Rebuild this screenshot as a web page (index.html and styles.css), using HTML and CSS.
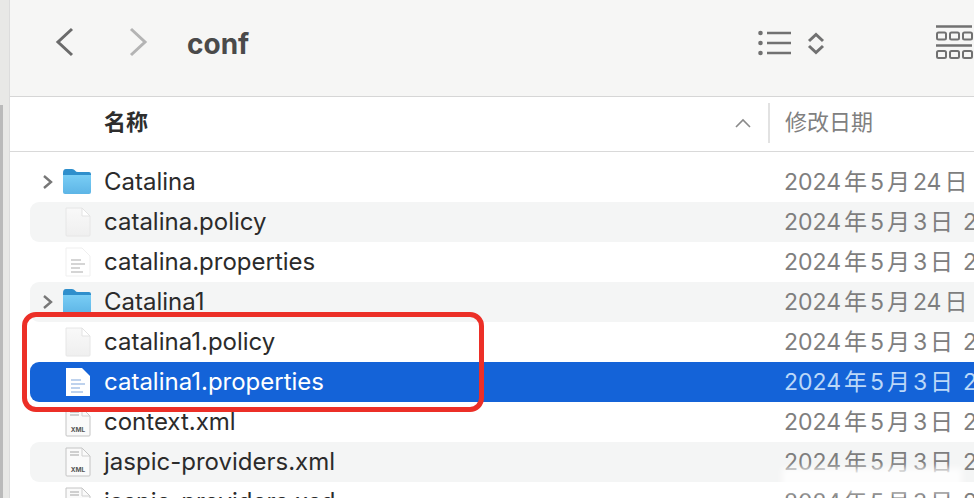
FILE: index.html
```html
<!DOCTYPE html>
<html lang="zh-CN">
<head>
    <meta charset="UTF-8">
    <title>conf</title>
    <link rel="stylesheet" href="styles.css">
</head>
<body>
    <div class="sidebar"></div>
    <div class="window">
        <!-- 工具栏 -->
        <div class="toolbar">
            <svg class="nav-icon" width="22" height="32" viewBox="0 0 22 32"><path d="M17 3 L3 16 L17 29" stroke="#6b6b6b"/></svg>
            <svg class="nav-icon nav-next" width="22" height="32" viewBox="0 0 22 32"><path d="M3 3 L17 16 L3 29" stroke="#b4b4b4"/></svg>
            <div class="title">conf</div>
            <svg class="list-icon" width="70" height="32" viewBox="0 0 70 32">
                <g stroke="#717171" stroke-width="2.4" fill="none">
                    <path d="M10 6 H34 M10 16 H34 M10 26 H34"/>
                    <path d="M52 14 L59 7.500 L66 14 M52 19 L59 25.500 L66 19" stroke-width="3"/>
                </g>
                <g fill="#717171"><circle cx="3.500" cy="6" r="2.300"/><circle cx="3.500" cy="16" r="2.300"/><circle cx="3.500" cy="26" r="2.300"/></g>
            </svg>
            <svg class="grid-icon" width="38" height="36" viewBox="0 0 38 36">
                <g fill="none" stroke="#717171">
                    <path d="M0 2.500 H36 M0 21.500 H36" stroke-width="2.400"/>
                    <rect x="1" y="8.500" width="9" height="7" rx="1.500" stroke-width="2"/><rect x="14" y="8.500" width="9" height="7" rx="1.500" stroke-width="2"/><rect x="27" y="8.500" width="9" height="7" rx="1.500" stroke-width="2"/>
                    <rect x="1" y="27" width="9" height="7" rx="1.500" stroke-width="2"/><rect x="14" y="27" width="9" height="7" rx="1.500" stroke-width="2"/><rect x="27" y="27" width="9" height="7" rx="1.500" stroke-width="2"/>
                </g>
            </svg>
        </div>

        <!-- 列标题 -->
        <div class="columns">
            <div class="col-name">名称</div>
            <svg class="sort-icon" width="16" height="10" viewBox="0 0 16 10"><path d="M1 9 L8 2 L15 9" fill="none" stroke="#8a8a8a" stroke-width="1.600"/></svg>
            <div class="col-sep"></div>
            <div class="col-date">修改日期</div>
        </div>

        <!-- 文件列表 -->
        <div class="rows">
            <div class="row">
                <svg class="arrow" width="12" height="16" viewBox="0 0 12 16"><path d="M2 2 L9 8 L2 14" fill="none" stroke="#777" stroke-width="2.400"/></svg>
                <svg class="icon" width="30" height="28" viewBox="0 0 30 28"><use href="#folder"/></svg>
                <span class="name">Catalina</span><span class="date">2024 年 5 月 24 日</span>
            </div>
            <div class="row odd">
                <svg class="icon" width="30" height="30" viewBox="0 0 30 30"><use href="#doc"/></svg>
                <span class="name">catalina.policy</span><span class="date">2024 年 5 月 3 日<span class="time">2</span></span>
            </div>
            <div class="row">
                <svg class="icon" width="30" height="30" viewBox="0 0 30 30"><use href="#doc-lines"/></svg>
                <span class="name">catalina.properties</span><span class="date">2024 年 5 月 3 日<span class="time">2</span></span>
            </div>
            <div class="row odd">
                <svg class="arrow" width="12" height="16" viewBox="0 0 12 16"><path d="M2 2 L9 8 L2 14" fill="none" stroke="#777" stroke-width="2.400"/></svg>
                <svg class="icon" width="30" height="28" viewBox="0 0 30 28"><use href="#folder"/></svg>
                <span class="name">Catalina1</span><span class="date">2024 年 5 月 24 日</span>
            </div>
            <div class="row">
                <svg class="icon" width="30" height="30" viewBox="0 0 30 30"><use href="#doc"/></svg>
                <span class="name">catalina1.policy</span><span class="date">2024 年 5 月 3 日<span class="time">2</span></span>
            </div>
            <div class="row selected">
                <svg class="icon" width="30" height="30" viewBox="0 0 30 30"><use href="#doc-white"/></svg>
                <span class="name">catalina1.properties</span><span class="date">2024 年 5 月 3 日<span class="time">2</span></span>
            </div>
            <div class="row">
                <svg class="icon" width="30" height="30" viewBox="0 0 30 30"><use href="#doc-xml"/></svg>
                <span class="name">context.xml</span><span class="date">2024 年 5 月 3 日<span class="time">2</span></span>
            </div>
            <div class="row odd">
                <svg class="icon" width="30" height="30" viewBox="0 0 30 30"><use href="#doc-xml"/></svg>
                <span class="name">jaspic-providers.xml</span><span class="date">2024 年 5 月 3 日<span class="time">2</span></span>
            </div>
            <div class="row">
                <svg class="icon" width="30" height="30" viewBox="0 0 30 30"><use href="#doc-xml"/></svg>
                <span class="name">jaspic-providers.xsd</span><span class="date">2024 年 5 月 3 日<span class="time">2</span></span>
            </div>
        </div>

        <!-- 红框标注 -->
        <div class="callout"></div>
        <div class="watermark"></div>
    </div>

    <svg class="defs" width="0" height="0">
        <defs>
            <linearGradient id="folder-body" x1="0" y1="0" x2="0" y2="1">
                <stop offset="0" stop-color="#79cdf5"/>
                <stop offset="1" stop-color="#5db5e6"/>
            </linearGradient>
            <linearGradient id="doc-body" x1="0" y1="0" x2="0" y2="1">
                <stop offset="0" stop-color="#f9f9f9"/>
                <stop offset="1" stop-color="#efefef"/>
            </linearGradient>
            <g id="folder">
                <path d="M1 6 Q1 2 4 2 H10 Q12 2 13 3.500 Q14 5 16 5 H27 Q29 5 29 7 V10 H1 Z" fill="#2f8fcc"/>
                <path d="M1 8 H29 V25 Q29 27 27 27 H3 Q1 27 1 25 Z" fill="url(#folder-body)"/>
            </g>
            <g id="doc">
                <path d="M4 1 H20 L28 9 V28 Q28 29 27 29 H5 Q4 29 4 28 Z" fill="url(#doc-body)" stroke="#e6e6e6"/>
                <path d="M20 1 V9 H28 Z" fill="#fff" stroke="#e3e3e3"/>
            </g>
            <g id="doc-lines">
                <path d="M4 1 H20 L28 9 V29 H4 Z" fill="#fff" stroke="#efefef"/>
                <path d="M9 13 H19 M9 17 H23 M9 21 H18 M9 25 H21" stroke="#c8c8c8" stroke-width="1.400"/>
            </g>
            <g id="doc-white">
                <path d="M4 1 H20 L28 9 V29 H4 Z" fill="#fff"/>
                <path d="M9 13 H19 M9 17 H23 M9 21 H18 M9 25 H21" stroke="#a9c4e8" stroke-width="1.400"/>
            </g>
            <g id="doc-xml">
                <path d="M4 1 H20 L28 9 V28 Q28 29 27 29 H5 Q4 29 4 28 Z" fill="#fafafa" stroke="#c4c4c4"/>
                <path d="M20 1 V9 H28" fill="none" stroke="#d0d0d0"/>
                <path d="M8 5 H17 M8 8 H17" stroke="#cfcfcf" stroke-width="2"/>
                <text x="16" y="25" class="xml-label">XML</text>
            </g>
        </defs>
    </svg>
</body>
</html>
```

FILE: styles.css
```css
body {
    margin: 0;
    width: 974px;
    height: 498px;
    overflow: hidden;
    display: flex;
    background: white;
    font-family: "Inter", "Noto Sans CJK SC", sans-serif;
}
.sidebar {
    width: 10px;
    flex-shrink: 0;
    box-sizing: border-box;
    background: #e8e8e6 linear-gradient(#bababa, #bababa) no-repeat 0 105px / 3px 100%;
    border-right: 1px solid #dcdcdc;
}
.window {
    position: relative;
    flex: 1;
    min-width: 0;
    overflow: hidden;
}
.toolbar {
    height: 84px;
    padding: 0 0 12px 45px;
    background: #f6f6f5;
    border-bottom: 1px solid #d6d6d6;
    display: flex;
    align-items: center;
}
.nav-icon {
    flex-shrink: 0;
}
.nav-icon path {
    fill: none;
    stroke-width: 3;
}
.nav-next {
    margin-left: 51px;
}
.title {
    margin: 3px 0 0 37px;
    width: 552px;
    flex-shrink: 0;
    font-size: 28px;
    font-weight: 700;
    color: #4a4a4a;
}
.list-icon {
    flex-shrink: 0;
    margin: 2px 0 0 18px;
}
.grid-icon {
    flex-shrink: 0;
    margin-left: 109px;
}
.columns {
    height: 46px;
    padding-bottom: 8px;
    border-bottom: 1px solid #d9d9d9;
    display: flex;
    align-items: center;
    font-size: 22px;
}
.col-name {
    margin-left: 94px;
    width: 631px;
    flex-shrink: 0;
    font-weight: 700;
    color: #2e2e2e;
}
.sort-icon {
    flex-shrink: 0;
    margin-top: 6px;
}
.col-sep {
    width: 2px;
    height: 40px;
    margin: 6px 0 0 17px;
    background: #e2e2e2;
}
.col-date {
    margin-left: 15px;
    color: #808080;
}
.rows {
    padding: 10px 0 0 20px;
}
.row {
    position: relative;
    height: 40px;
    display: flex;
    align-items: center;
    border-radius: 9px 0 0 9px;
    font-size: 24px;
    white-space: nowrap;
}
.odd {
    background: #f4f5f5;
}
.selected {
    background: #1463d8;
    color: white;
}
.arrow {
    position: absolute;
    left: 12px;
    top: 12px;
}
.icon {
    position: absolute;
    left: 32px;
    top: 5px;
}
.name {
    margin-left: 74px;
    padding-bottom: 2px;
    width: 680px;
    flex-shrink: 0;
    color: #2b2b2b;
}
.date {
    padding-bottom: 5px;
    font-size: 23px;
    word-spacing: -3.500px;
    color: #7e7e7e;
}
.time {
    margin-left: 10px;
}
.selected .name {
    color: white;
}
.selected .date {
    color: #bcd8f8;
}
.callout {
    position: absolute;
    left: 12px;
    top: 312px;
    width: 462px;
    height: 100px;
    box-sizing: border-box;
    border: 5px solid #ec2f27;
    border-radius: 14px;
}
.watermark {
    position: absolute;
    left: 772px;
    top: 468px;
    width: 180px;
    height: 24px;
    background: rgba(255, 255, 255, 0.8);
    filter: blur(3px);
}
.xml-label {
    font-size: 6.500px;
    font-weight: 700;
    text-anchor: middle;
    fill: #555;
}
.defs {
    position: absolute;
}
```
